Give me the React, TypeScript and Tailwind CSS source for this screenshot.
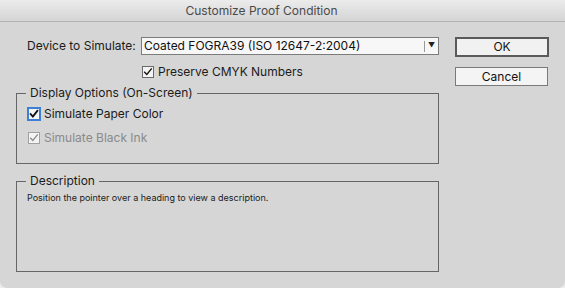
import React from 'react';

const font = { fontFamily: 'Inter, "Liberation Sans", sans-serif' };

const Check = ({ disabled = false, focused = false }: { disabled?: boolean; focused?: boolean }) => (
  <span
    className={`flex h-[12px] w-[12px] flex-none items-center justify-center border bg-[#f4f4f4] ${
      focused ? 'border-[#3b7fd6] outline outline-1 outline-[#3b7fd6]' : disabled ? 'border-[#a0a0a0]' : 'border-[#6a6a6a]'
    }`}
  >
    <svg viewBox="0 0 12 12" className="h-[10px] w-[10px]">
      <path
        d="M2 6.2 L4.6 9 L10 2.2"
        fill="none"
        stroke={disabled ? '#8c8c8c' : '#111'}
        strokeWidth={focused ? 2.2 : 1.6}
        strokeLinecap="square"
      />
    </svg>
  </span>
);

const Group = ({ title, className, children }: { title: string; className: string; children: React.ReactNode }) => (
  <div className={`relative border border-[#666] ${className}`}>
    <span className="absolute left-[9px] top-[-10px] whitespace-nowrap bg-[#d6d6d6] px-[4px] text-[12px] leading-[18px] text-[#1b1b1b]">
      {title}
    </span>
    {children}
  </div>
);

export default function App() {
  return (
    <div className="h-[288px] w-[565px] bg-[#ececec]" style={font}>
      <div className="flex h-[288px] flex-col overflow-hidden rounded-b-[7px] bg-[#d6d6d6]">
        {/* title bar */}
        <div className="flex h-[22px] flex-none items-center justify-center border-b border-[#b4b4b4] bg-gradient-to-b from-[#ececec] to-[#d4d4d4] pr-[42px] text-[12px] text-[#4a4a4a]">
          Customize Proof Condition
        </div>

        <div className="flex">
          {/* left column */}
          <div className="w-[455px] flex-none pl-[16px]">
            <div className="mt-[15px] flex items-center">
              <span className="w-[125px] flex-none whitespace-nowrap pl-[11px] text-[12px] text-[#1b1b1b]">Device to Simulate:</span>
              <div className="flex h-[18px] w-[298px] items-center border border-[#7c7c7c] bg-[#f7f7f7] text-[12px] text-[#111]">
                <span className="flex-1 whitespace-nowrap pl-[2px]">Coated FOGRA39 (ISO 12647-2:2004)</span>
                <span className="h-[11px] w-px bg-[#9a9a9a]" />
                <span className="flex w-[13px] justify-center text-[7px] text-[#222]">▼</span>
              </div>
            </div>

            <div className="mt-[11px] flex h-[12px] items-center pl-[126px] text-[12px] text-[#1b1b1b]">
              <Check />
              <span className="ml-[4px] whitespace-nowrap">Preserve CMYK Numbers</span>
            </div>

            <Group title="Display Options (On-Screen)" className="mt-[15px] h-[71px] w-[423px]">
              <div className="mt-[13px] flex h-[13px] items-center pl-[11px] text-[12px] text-[#1b1b1b]">
                <Check focused />
                <span className="ml-[4px] whitespace-nowrap">Simulate Paper Color</span>
              </div>
              <div className="mt-[12px] flex h-[12px] items-center pl-[11px] text-[12px] text-[#8a8a8a]">
                <Check disabled />
                <span className="ml-[4px] whitespace-nowrap">Simulate Black Ink</span>
              </div>
            </Group>

            <Group title="Description" className="mt-[17px] h-[91px] w-[423px]">
              <p className="mt-[9px] whitespace-nowrap pl-[10px] text-[9px] text-[#1b1b1b]">
                Position the pointer over a heading to view a description.
              </p>
            </Group>
          </div>

          {/* buttons */}
          <div className="flex flex-col pt-[15px]">
            <button className="h-[20px] w-[94px] border-2 border-[#5a5a5a] bg-[#f1f1f1] text-[12px] leading-none text-[#111]">
              OK
            </button>
            <button className="mt-[10px] h-[19px] w-[93px] border border-[#7a7a7a] bg-[#f4f4f4] text-[12px] leading-none text-[#111]">
              Cancel
            </button>
          </div>
        </div>
      </div>
    </div>
  );
}
